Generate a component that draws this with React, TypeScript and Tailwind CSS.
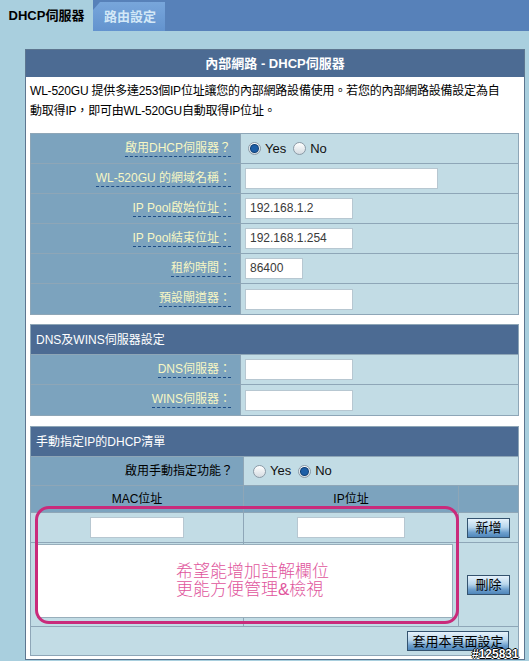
import type { ReactNode } from 'react';

function Radio({ checked }: { checked?: boolean }) {
  return (
    <span className="inline-flex h-[13px] w-[13px] items-center justify-center rounded-full border border-[#8b9aa6] bg-[linear-gradient(to_bottom,#ffffff,#d4dbe1)]">
      {checked && <span className="h-[7px] w-[7px] rounded-full bg-[#1d5ea6] ring-1 ring-[#0d3d73]" />}
    </span>
  );
}

function YesNo({ yes }: { yes: boolean }) {
  return (
    <div className="flex items-center gap-[4px] text-[13px] text-[#111]">
      <Radio checked={yes} />
      <span className="mr-[3px]">Yes</span>
      <Radio checked={!yes} />
      <span>No</span>
    </div>
  );
}

function Field({ w, value }: { w: string; value?: string }) {
  return (
    <div className={`h-[21px] ${w} border border-[#b7c7d1] bg-white px-[4px] text-[12px] leading-[19px] text-[#3a3a3a]`}>
      {value}
    </div>
  );
}

function Row({ label, children, last }: { label: string; children: ReactNode; last?: boolean }) {
  return (
    <div className={`flex h-[30px] ${last ? '' : 'border-b border-[#8ea6b7]'}`}>
      <div className="flex w-[210px] items-center justify-end border-r border-[#8ea6b7] bg-[#7ca3be] pr-[9px]">
        <span className="border-b border-dashed border-[#1d4d86] pb-[1px] text-[12px] leading-[14px] text-[#f7f7c4]">
          {label}
        </span>
      </div>
      <div className="flex flex-1 items-center bg-[#c2dce5] pl-[4px]">{children}</div>
    </div>
  );
}

function SectionHead({ title }: { title: string }) {
  return (
    <div className="flex h-[30px] items-center border-b border-[#8ea6b7] bg-[#4c6b93] pl-[5px] text-[12px] text-white">
      {title}
    </div>
  );
}

function Btn({ children, w }: { children: ReactNode; w: string }) {
  return (
    <button className={`h-[20px] ${w} border border-[#34536f] bg-[linear-gradient(to_bottom,#e6f2fb_0%,#b9d7ed_45%,#6d9fcd_75%,#4f86ba_100%)] text-[13px] leading-none text-black`}>
      {children}
    </button>
  );
}

export default function App() {
  return (
    <div className="relative h-[661px] w-[529px] overflow-hidden bg-[#a9cfde] [font-family:'Liberation_Sans','Noto_Sans_CJK_TC',sans-serif]">
      <div className="flex h-[31px] items-end bg-[#5781b9]">
        <div className="flex h-[31px] w-[93px] items-center justify-center bg-[#a9cfde] text-[13px] font-bold text-black">
          DHCP伺服器
        </div>
        <div className="flex h-[29px] w-[72px] items-center justify-center bg-[linear-gradient(to_bottom,#78a6db,#6393ce)] pl-[2px] text-[13px] font-bold text-[#d3e8f7] [clip-path:polygon(0_8px,7px_0,100%_0,100%_100%,0_100%)]">
          路由設定
        </div>
      </div>

      <div className="ml-[25px] mt-[18px] w-[500px] border border-[#5d7690] bg-white pb-[3px]">
        <div className="flex h-[27px] items-center justify-center bg-[#4c6b93] text-[13px] font-bold text-white">
          內部網路 - DHCP伺服器
        </div>
        <div className="h-[56px] whitespace-nowrap pl-[4px] pt-[4px] text-[12px] leading-[20px] tracking-[-0.2px] text-black">
          <div>WL-520GU 提供多達253個IP位址讓您的內部網路設備使用。若您的內部網路設備設定為自</div>
          <div>動取得IP，即可由WL-520GU自動取得IP位址。</div>
        </div>

        <div className="ml-[4px] w-[489px] border border-[#8ea6b7]">
          <Row label="啟用DHCP伺服器？">
            <div className="pl-[3px]">
              <YesNo yes />
            </div>
          </Row>
          <Row label="WL-520GU 的網域名稱：">
            <Field w="w-[193px]" />
          </Row>
          <Row label="IP Pool啟始位址：">
            <Field w="w-[108px]" value="192.168.1.2" />
          </Row>
          <Row label="IP Pool結束位址：">
            <Field w="w-[108px]" value="192.168.1.254" />
          </Row>
          <Row label="租約時間：">
            <Field w="w-[58px]" value="86400" />
          </Row>
          <Row label="預設閘道器：" last>
            <Field w="w-[108px]" />
          </Row>
        </div>

        <div className="ml-[4px] mt-[9px] w-[489px] border border-[#8ea6b7]">
          <SectionHead title="DNS及WINS伺服器設定" />
          <Row label="DNS伺服器：">
            <Field w="w-[108px]" />
          </Row>
          <Row label="WINS伺服器：" last>
            <Field w="w-[108px]" />
          </Row>
        </div>

        <div className="ml-[4px] mt-[10px] w-[489px] border border-[#8ea6b7]">
          <SectionHead title="手動指定IP的DHCP清單" />
          <div className="flex h-[29px] border-b border-[#8ea6b7]">
            <div className="flex w-[213px] items-center justify-end border-r border-[#8ea6b7] bg-[#7ca3be] pr-[10px] text-[12px] text-black">
              啟用手動指定功能？
            </div>
            <div className="flex flex-1 items-center bg-[#c2dce5] pl-[9px]">
              <YesNo yes={false} />
            </div>
          </div>
          <div className="flex h-[27px] border-b border-[#8ea6b7] bg-[#7ca3be] text-[12px] text-black">
            <div className="flex w-[213px] items-center justify-center border-r border-[#8ea6b7]">MAC位址</div>
            <div className="flex w-[215px] items-center justify-center border-r border-[#8ea6b7]">IP位址</div>
            <div className="flex-1" />
          </div>
          <div className="flex h-[30px] border-b border-[#8ea6b7] bg-[#c2dce5]">
            <div className="flex w-[213px] items-center justify-center border-r border-[#8ea6b7]">
              <Field w="w-[94px]" />
            </div>
            <div className="flex w-[215px] items-center justify-center border-r border-[#8ea6b7]">
              <Field w="w-[108px]" />
            </div>
            <div className="flex flex-1 items-center justify-center">
              <Btn w="w-[43px]">新增</Btn>
            </div>
          </div>
          <div className="flex h-[84px] border-b border-[#8ea6b7] bg-[#c2dce5]">
            <div className="w-[213px] border-r border-[#8ea6b7]" />
            <div className="w-[215px] border-r border-[#8ea6b7]" />
            <div className="flex flex-1 items-center justify-center">
              <Btn w="w-[43px]">刪除</Btn>
            </div>
          </div>
          <div className="flex h-[28px] items-center justify-end bg-[#c2dce5] pr-[9px]">
            <Btn w="w-[102px]">套用本頁面設定</Btn>
          </div>
        </div>
      </div>

      {/* annotation drawn over the screenshot */}
      <div className="absolute left-[37px] top-[544px] flex h-[74px] w-[416px] flex-col justify-center border border-[#98aebb] bg-white pl-[138px] text-[17px] font-light leading-[18px] text-[#e0559c]">
        <div>希望能增加註解欄位</div>
        <div>更能方便管理&amp;檢視</div>
      </div>
      <div className="absolute left-[35px] top-[506px] h-[118px] w-[424px] rounded-[14px] border-[3px] border-[#c92b7b]" />

      <div className="absolute left-[472px] top-[645px] text-[12px] font-bold text-white [text-shadow:1px_0_0_#000,-1px_0_0_#000,0_1px_0_#000,0_-1px_0_#000]">
        #125831
      </div>
    </div>
  );
}
